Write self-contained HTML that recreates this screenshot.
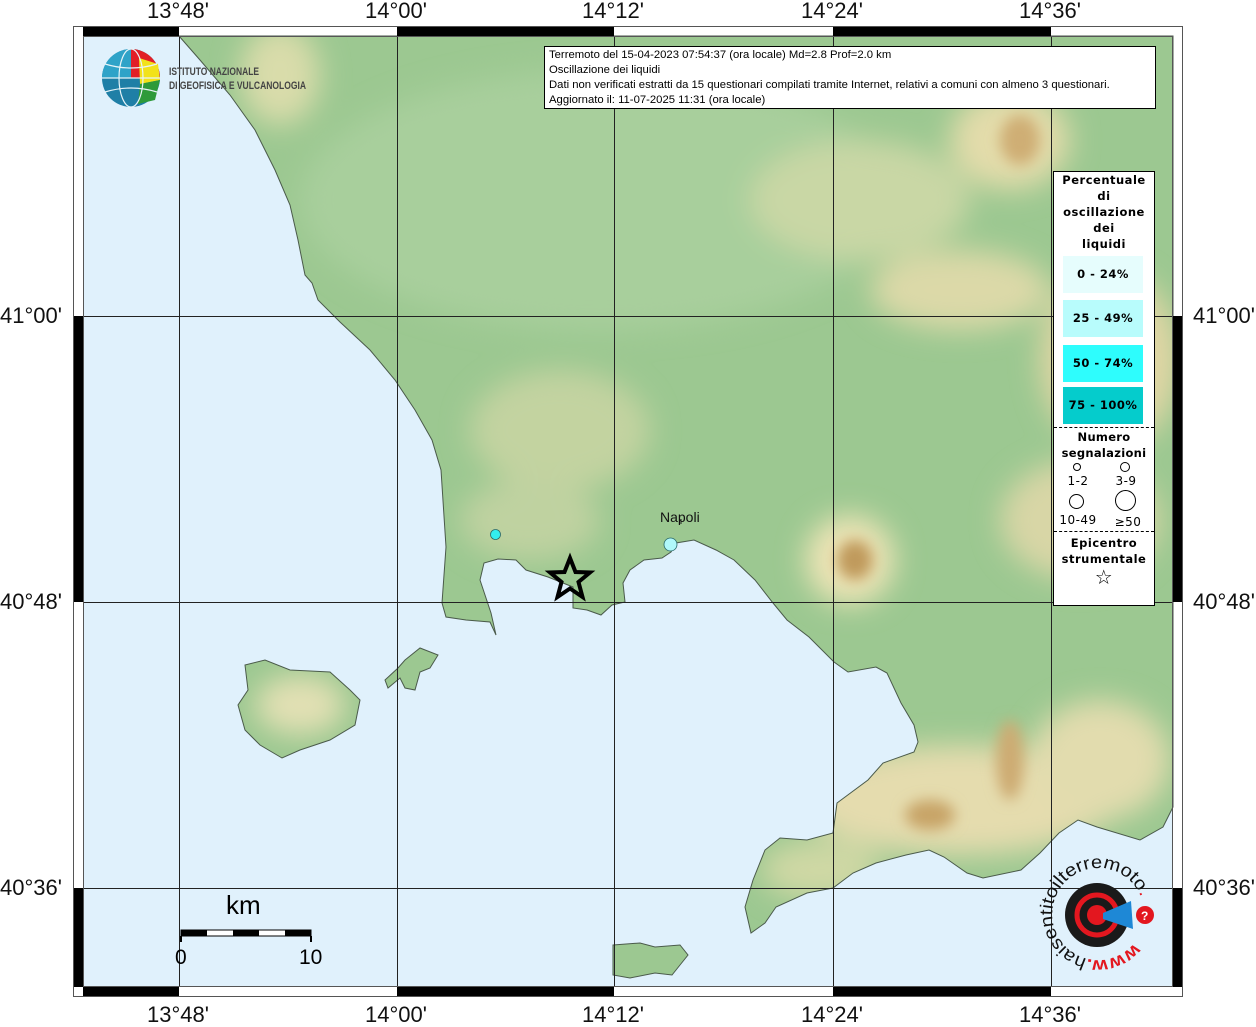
<!DOCTYPE html>
<html><head><meta charset="utf-8"><style>
html,body{margin:0;padding:0;background:#fff;}
body{width:1256px;height:1024px;overflow:hidden;position:relative;font-family:"Liberation Sans",sans-serif;}
.ax{position:absolute;font-size:22px;color:#111;line-height:22px;}
</style></head><body>
<svg width="1256" height="1024" style="position:absolute;left:0;top:0">
<defs>
<filter id="b" x="-50%" y="-50%" width="200%" height="200%"><feGaussianBlur stdDeviation="14"/></filter>
<filter id="b2" x="-50%" y="-50%" width="200%" height="200%"><feGaussianBlur stdDeviation="7"/></filter>
<clipPath id="land"><path id="landp" d="M179,36 L200,60 230,95 255,130 275,170 290,205 298,240 305,275 312,283 318,300 340,322 370,350 395,380 415,410 432,440 441,470 446,547 442,603 446,617 466,620 490,622 496,635 491,613 480,580 484,563 498,559 516,560 526,570 548,577 573,587 573,608 587,610 601,615 612,605 625,602 623,583 630,570 644,560 662,558 671,552 676,543 694,540 716,550 734,560 755,580 773,603 787,620 809,637 834,662 848,672 876,667 887,673 901,703 914,725 918,742 914,752 883,763 868,780 837,803 833,833 807,840 780,838 765,850 753,880 745,907 751,933 765,923 776,907 807,893 833,888 853,873 876,863 906,855 929,850 944,857 967,873 983,878 1021,870 1040,853 1059,833 1078,820 1097,827 1140,840 1163,827 1173,807 1173,36 Z
M245,665 L265,660 290,670 330,672 350,690 360,700 355,725 330,740 300,750 282,758 260,745 245,730 238,705 248,690 Z
M405,660 L420,648 438,655 430,668 420,672 415,690 405,688 400,678 388,688 385,680 398,668 Z
M613,945 L640,943 655,947 680,945 688,955 680,965 672,975 655,973 630,978 613,975 Z"/></clipPath>
</defs>
<rect x="83" y="36" width="1090" height="951" fill="#e0f1fc"/>
<g clip-path="url(#land)">
<rect x="83" y="36" width="1090" height="951" fill="#9cc891"/>
<g filter="url(#b)">
<ellipse cx="600" cy="200" rx="300" ry="130" fill="#a8cf9c"/>
<ellipse cx="560" cy="430" rx="90" ry="60" fill="#c3d3a0"/>
<ellipse cx="280" cy="75" rx="40" ry="50" fill="#d9dcaa"/>
<ellipse cx="860" cy="200" rx="110" ry="60" fill="#c9d7a5"/>
<ellipse cx="1010" cy="140" rx="60" ry="50" fill="#e3dcaa"/>
<ellipse cx="960" cy="290" rx="90" ry="40" fill="#dcd9a8"/>
<ellipse cx="1110" cy="360" rx="70" ry="90" fill="#e0d6a4"/>
<ellipse cx="1080" cy="520" rx="80" ry="60" fill="#d8d6a6"/>
<ellipse cx="850" cy="560" rx="45" ry="45" fill="#ede4b6"/>
<ellipse cx="960" cy="800" rx="160" ry="55" fill="#e5dcae"/>
<ellipse cx="1100" cy="760" rx="70" ry="60" fill="#e2dcae"/>
<ellipse cx="820" cy="870" rx="60" ry="30" fill="#cfd8a4"/>
<ellipse cx="300" cy="705" rx="45" ry="30" fill="#e2e0b4"/>
<ellipse cx="530" cy="520" rx="70" ry="40" fill="#bfd2a0"/>
</g>
<g filter="url(#b2)">
<ellipse cx="855" cy="560" rx="18" ry="20" fill="#c09a5c"/>
<ellipse cx="1020" cy="140" rx="20" ry="25" fill="#cfae75"/>
<ellipse cx="1010" cy="760" rx="14" ry="40" fill="#cdab72"/>
<ellipse cx="930" cy="815" rx="25" ry="15" fill="#c8a468"/>
</g>
</g>
<use href="#landp" fill="none" stroke="#4a5a4a" stroke-width="1"/>
<!-- grid -->
<g stroke="#222" stroke-width="1">
<line x1="179.5" y1="36" x2="179.5" y2="987"/><line x1="397.5" y1="36" x2="397.5" y2="987"/><line x1="614.5" y1="36" x2="614.5" y2="987"/><line x1="833.5" y1="36" x2="833.5" y2="987"/><line x1="1051.5" y1="36" x2="1051.5" y2="987"/>
<line x1="83" y1="316.5" x2="1173" y2="316.5"/><line x1="83" y1="602.5" x2="1173" y2="602.5"/><line x1="83" y1="888.5" x2="1173" y2="888.5"/>
</g>
<!-- frame -->
<rect x="73.5" y="26.5" width="1109" height="970" fill="none" stroke="#555" stroke-width="1"/>
<rect x="83.5" y="36.5" width="1089" height="950" fill="none" stroke="#555" stroke-width="1"/>
<g fill="#000">
<rect x="83" y="27" width="96" height="9"/><rect x="397" y="27" width="217" height="9"/><rect x="833" y="27" width="218" height="9"/>
<rect x="83" y="987" width="96" height="9"/><rect x="397" y="987" width="217" height="9"/><rect x="833" y="987" width="218" height="9"/>
<rect x="74" y="316" width="9" height="286"/><rect x="74" y="888" width="9" height="99"/>
<rect x="1173" y="316" width="9" height="286"/><rect x="1173" y="888" width="9" height="99"/>
</g>
<!-- points -->
<circle cx="495.5" cy="534.5" r="5" fill="#33eeee" stroke="#2a6a6a" stroke-width="0.8"/>
<circle cx="670.5" cy="544.5" r="6.5" fill="#b0f8fa" stroke="#2a6a6a" stroke-width="0.8"/>
<line x1="681" y1="519" x2="681" y2="524" stroke="#222"/>
<text x="660" y="522" font-family="Liberation Sans" font-size="14" fill="#111">Napoli</text>
<!-- star -->
<path d="M570,558 L575.5,572 590,572.5 578.5,582 582.5,597 570,588.5 557.5,597 561.5,582 550,572.5 564.5,572 Z" fill="none" stroke="#000" stroke-width="4" stroke-linejoin="miter"/>
<!-- scale bar -->
<rect x="181" y="930" width="130" height="6" fill="#fff" stroke="#000" stroke-width="1"/>
<rect x="181" y="930" width="26" height="6" fill="#000"/><rect x="233" y="930" width="26" height="6" fill="#000"/><rect x="285" y="930" width="26" height="6" fill="#000"/>
<line x1="181" y1="936" x2="181" y2="942" stroke="#000" stroke-width="2"/><line x1="311" y1="936" x2="311" y2="942" stroke="#000" stroke-width="2"/>
<text x="226" y="914" font-family="Liberation Sans" font-size="26" fill="#000">km</text>
<text x="175" y="964" font-family="Liberation Sans" font-size="21" fill="#000">0</text>
<text x="299" y="964" font-family="Liberation Sans" font-size="21" fill="#000">10</text>
<!-- INGV logo -->
<circle cx="131" cy="78" r="29" fill="#1f7fa6"/>
<path d="M131,49 A29,29 0 0,1 160,78 L131,78 Z" fill="#e21f26"/>
<path d="M139,58 L158,64 160,80 140,84 Z" fill="#f2e21a"/>
<path d="M140,84 L160,80 155,100 138,104 Z" fill="#2e9a3a"/>
<path d="M102,78 A29,29 0 0,1 131,49 L131,78 Z" fill="#2fa3c8"/>
<g fill="none" stroke="#e8f4f8" stroke-width="1.2"><ellipse cx="131" cy="78" rx="12" ry="29"/><line x1="102" y1="78" x2="160" y2="78"/><path d="M105,64 Q131,72 157,64"/><path d="M105,92 Q131,84 157,92"/></g>
<text x="169" y="75" font-family="Liberation Sans" font-weight="bold" font-size="11" fill="#444" textLength="90" lengthAdjust="spacingAndGlyphs">ISTITUTO NAZIONALE</text>
<text x="169" y="89" font-family="Liberation Sans" font-weight="bold" font-size="11" fill="#444" textLength="137" lengthAdjust="spacingAndGlyphs">DI GEOFISICA E VULCANOLOGIA</text>
<!-- haisentito logo -->
<circle cx="1097" cy="915" r="32" fill="#1a1a1a"/>
<circle cx="1097" cy="915" r="20" fill="none" stroke="#e3171f" stroke-width="5"/>
<circle cx="1097" cy="915" r="10" fill="#e3171f"/>
<path d="M1103,913 L1131,901 1133,929 1103,919 Z" fill="#1e88d6"/>
<circle cx="1145" cy="915" r="9" fill="#e3171f"/><text x="1141" y="920" font-family="Liberation Sans" font-weight="bold" font-size="12" fill="#fff">?</text>
<path id="arc" d="M1134,943 A46,46 0 1,1 1141,897" fill="none"/>
<text font-family="Liberation Sans" font-size="18" fill="#111" textLength="250" lengthAdjust="spacingAndGlyphs"><textPath href="#arc"><tspan fill="#e3171f" font-weight="bold">www.</tspan>haisentitoilterremoto<tspan fill="#e3171f">.it</tspan></textPath></text>
</svg>
<!-- info box -->
<div style="position:absolute;left:544px;top:46px;background:#fff;border:1px solid #000;font-size:11.3px;line-height:15px;padding:1px 0 0 4px;box-sizing:border-box;width:612px;height:63px;color:#000;white-space:nowrap;">
Terremoto del 15-04-2023 07:54:37 (ora locale) Md=2.8 Prof=2.0 km<br>Oscillazione dei liquidi<br>Dati non verificati estratti da 15 questionari compilati tramite Internet, relativi a comuni con almeno 3 questionari.<br>Aggiornato il: 11-07-2025 11:31 (ora locale)</div>
<!-- legend -->
<div style="position:absolute;left:1053px;top:171px;width:102px;height:435px;background:#fff;border:1px solid #000;box-sizing:border-box;font-family:'DejaVu Sans',sans-serif;font-weight:bold;font-size:11.5px;letter-spacing:0.5px;text-align:center;color:#000;">
<div style="line-height:16px;margin-top:0px">Percentuale<br>di<br>oscillazione<br>dei<br>liquidi</div>
<div style="position:absolute;left:9px;top:84px;width:80px;height:37px;background:#e6fdfd;line-height:37px">0 - 24%</div>
<div style="position:absolute;left:9px;top:128px;width:80px;height:37px;background:#b8fcfc;line-height:37px">25 - 49%</div>
<div style="position:absolute;left:9px;top:173px;width:80px;height:37px;background:#2efdfd;line-height:37px">50 - 74%</div>
<div style="position:absolute;left:9px;top:215px;width:80px;height:37px;background:#05cccc;line-height:37px">75 - 100%</div>
<div style="position:absolute;left:0;top:255px;width:100px;border-top:1px dashed #000"></div>
<div style="position:absolute;left:0;top:257px;width:100px;line-height:16px;letter-spacing:0.3px">Numero<br>segnalazioni</div>
<div style="position:absolute;left:19px;top:291px;width:6px;height:6px;border:1.5px solid #000;border-radius:50%"></div>
<div style="position:absolute;left:66px;top:290px;width:8px;height:8px;border:1.5px solid #000;border-radius:50%"></div>
<div style="position:absolute;left:4px;top:302px;width:40px;font-weight:normal;font-size:12px">1-2</div>
<div style="position:absolute;left:52px;top:302px;width:40px;font-weight:normal;font-size:12px">3-9</div>
<div style="position:absolute;left:15px;top:322px;width:13px;height:13px;border:1.5px solid #000;border-radius:50%"></div>
<div style="position:absolute;left:61px;top:318px;width:19px;height:19px;border:1.5px solid #000;border-radius:50%"></div>
<div style="position:absolute;left:2px;top:341px;width:44px;font-weight:normal;font-size:12px">10-49</div>
<div style="position:absolute;left:52px;top:343px;width:44px;font-weight:normal;font-size:12px">≥50</div>
<div style="position:absolute;left:0;top:359px;width:100px;border-top:1px dashed #000"></div>
<div style="position:absolute;left:0;top:363px;width:100px;line-height:16px">Epicentro<br>strumentale</div>
<div style="position:absolute;left:0;top:395px;width:100px;font-size:20px;font-weight:normal;line-height:20px">☆</div>
</div>
<!-- axis labels -->
<div class="ax" style="left:147px;top:0px">13°48'</div>
<div class="ax" style="left:365px;top:0px">14°00'</div>
<div class="ax" style="left:582px;top:0px">14°12'</div>
<div class="ax" style="left:801px;top:0px">14°24'</div>
<div class="ax" style="left:1019px;top:0px">14°36'</div>
<div class="ax" style="left:147px;top:1004px">13°48'</div>
<div class="ax" style="left:365px;top:1004px">14°00'</div>
<div class="ax" style="left:582px;top:1004px">14°12'</div>
<div class="ax" style="left:801px;top:1004px">14°24'</div>
<div class="ax" style="left:1019px;top:1004px">14°36'</div>
<div class="ax" style="left:0px;top:305px">41°00'</div>
<div class="ax" style="left:0px;top:591px">40°48'</div>
<div class="ax" style="left:0px;top:877px">40°36'</div>
<div class="ax" style="left:1193px;top:305px">41°00'</div>
<div class="ax" style="left:1193px;top:591px">40°48'</div>
<div class="ax" style="left:1193px;top:877px">40°36'</div>
</body></html>
